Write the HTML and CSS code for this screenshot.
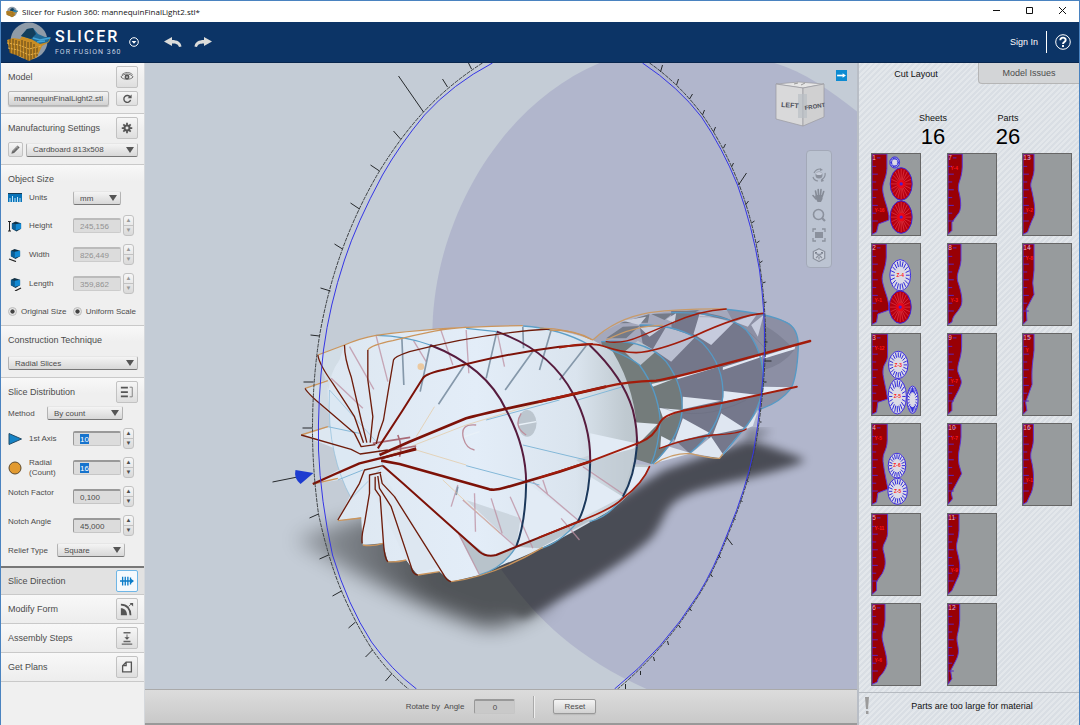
FILE: index.html
```html
<!DOCTYPE html>
<html lang="en">
<head>
    <meta charset="UTF-8">
    <meta name="viewport" content="width=device-width, initial-scale=1.0">
    <title>Slicer for Fusion 360</title>
    <link rel="stylesheet" href="styles.css">
</head>
<body>
<svg class="defs" aria-hidden="true">
    <defs>
        <symbol id="logo" viewBox="0 0 44 40">
            <circle cx="22" cy="19" r="18.500" fill="#8f9ba8"/>
            <path d="M0 18 L6 16 L13 17 L18 10 L24 7 L30 13 L37 16 L44 15 L42 20 L35 24 L30 35 L22 39 L16 36 L9 33 L3 31 Z" fill="#c98d24"/>
            <path d="M14 14 L20 7 L26 6 L31 12 L38 15 L44 15 L41 20 L33 22 L24 17 Z" fill="#206a98"/>
            <path d="M14 14 L20 7 L26 6 L29 12 L24 17 Z" fill="#123e5c"/>
            <path d="M26 16 L33 18 L43 16 M30 20 L38 19" stroke="#41a4d8" stroke-width="1.500" fill="none"/>
            <path d="M3 17 V31 M6 17 V32 M9 18 V33 M12 19 V34 M15 18 V35 M18 19 V37 M21 20 V39 M24 20 V38 M27 22 V36 M30 24 V34" stroke="#59421a" stroke-width="1"/>
            <path d="M0 21 L12 23 L22 27 L34 24 M1 26 L11 28 L22 33 L31 31" stroke="#e5b14d" stroke-width="1" stroke-dasharray="2 1" fill="none"/>
        </symbol>
        <symbol id="cube" viewBox="0 0 12 12">
            <path d="M1 3 L5 1 L11 3 V9 L6 12 L1 9 Z" fill="#123247"/>
            <path d="M1 3 L5 4 V11 L1 9 Z" fill="#0c5f97"/>
            <path d="M5 4 L11 3 V9 L5 11 Z" fill="#1389d3"/>
        </symbol>
    </defs>
</svg>
<div class="app">
    <div class="titlebar">
        <svg class="title-logo"><use href="#logo"/></svg>
        <span class="title-text">Slicer for Fusion 360: mannequinFinalLight2.stl*</span>
        <div class="window-buttons">
            <button aria-label="Minimize"><svg viewBox="0 0 9 9"><path d="M1 4.500 H8"/></svg></button>
            <button aria-label="Maximize"><svg viewBox="0 0 9 9"><path d="M1.500 1.500 H7.500 V7.500 H1.500 Z"/></svg></button>
            <button aria-label="Close"><svg viewBox="0 0 9 9"><path d="M1 1 L8 8 M8 1 L1 8"/></svg></button>
        </div>
    </div>

    <header class="header">
        <svg class="logo"><use href="#logo"/></svg>
        <div class="brand">
            <span class="brand-name">SLICER</span>
            <span class="brand-sub">FOR FUSION 360</span>
        </div>
        <button class="head-btn menu-btn" aria-label="Menu"><svg viewBox="0 0 10 10"><circle cx="5" cy="5" r="4.300" fill="none" stroke="#fff" stroke-width="1"/><path d="M2.600 4 H7.400 L5 6.800 Z" fill="#fff"/></svg></button>
        <button class="head-btn arrow-btn" aria-label="Undo"><svg viewBox="0 0 18 12"><path d="M0 5.500 L8 1 V4 C13 4 17 6 17.500 10.500 L15 11 C14 8 12 7.500 8 7.500 V10 Z" fill="#dcdcda"/></svg></button>
        <button class="head-btn arrow-btn" aria-label="Redo"><svg viewBox="0 0 18 12"><path d="M18 5.500 L10 1 V4 C5 4 1 6 .5 10.500 L3 11 C4 8 6 7.500 10 7.500 V10 Z" fill="#dcdcda"/></svg></button>
        <a class="signin" href="#">Sign In</a>
        <button class="head-btn help-btn" aria-label="Help"><svg viewBox="0 0 16 16"><circle cx="8" cy="8" r="7.300" fill="none" stroke="#fff" stroke-width="1"/><path d="M5.300 6.300 C5.300 2.800 10.700 2.800 10.700 6 C10.700 8 8 8 8 10 M8 11 V13" fill="none" stroke="#fff" stroke-width="1.900"/></svg></button>
    </header>

    <main class="main">
        <aside class="sidebar">
            <section class="group">
                <div class="group-head">
                    <h2>Model</h2>
                    <button class="tool" aria-label="Show model"><svg viewBox="0 0 16 16"><path d="M1 8 C4 3.500 12 3.500 15 8 C12 11.500 4 11.500 1 8 Z M2 5.500 C6 2 11 2 14.500 5.500" fill="none" stroke="#666"/><circle cx="8" cy="8" r="2.800" fill="#555"/><circle cx="8" cy="8" r="1" fill="#ddd"/></svg></button>
                </div>
                <div class="line model-line">
                    <button class="btn file-btn">mannequinFinalLight2.stl</button>
                    <button class="tool short" aria-label="Reload"><svg viewBox="0 0 16 16"><path d="M12 6 A5 5 0 1 0 12.500 10" fill="none" stroke="#555" stroke-width="2"/><path d="M8 7.500 H14 V2 Z" fill="#555"/></svg></button>
                </div>
            </section>

            <section class="group">
                <div class="group-head">
                    <h2>Manufacturing Settings</h2>
                    <button class="tool" aria-label="Settings"><svg viewBox="0 0 16 16"><path d="M8 2 V14 M2 8 H14 M3.800 3.800 L12.200 12.200 M12.200 3.800 L3.800 12.200" stroke="#555" stroke-width="2"/><circle cx="8" cy="8" r="4" fill="#555"/><circle cx="8" cy="8" r="1.700" fill="#e5e5e5"/></svg></button>
                </div>
                <div class="line">
                    <button class="tool pencil" aria-label="Edit"><svg viewBox="0 0 16 16"><path d="M2 14 L3 10 L11 2 L14 5 L6 13 Z" fill="#666"/><path d="M4 11 L12 3 M9 4 L12 7" stroke="#bbb"/></svg></button>
                    <span class="pick grow"><select aria-label="Material"><option>Cardboard 813x508</option></select></span>
                </div>
            </section>

            <section class="group object-size">
                <h2>Object Size</h2>
                <div class="row">
                    <svg class="row-icon" viewBox="0 0 14 14"><path d="M0 3 H14 V11 H0 Z" fill="#0873b8"/><path d="M0 2.500 H14" stroke="#163b55"/><path d="M2 11 V7 M4.500 11 V5 M7 11 V7 M9.500 11 V6 M12 11 V7" stroke="#bfe4f8"/></svg>
                    <label for="units">Units</label>
                    <span class="pick units"><select id="units"><option>mm</option></select></span>
                </div>
                <div class="row">
                    <svg class="row-icon" viewBox="0 0 14 14"><use href="#cube" x="3" y="1" width="11" height="12"/><path d="M0 2.500 H3 M0 12 H3 M1.500 2.500 V12" stroke="#222"/></svg>
                    <label for="height">Height</label>
                    <input class="num off" id="height" type="text" value="245,156">
                    <span class="spin off"><button aria-label="Height up">▲</button><button aria-label="Height down">▼</button></span>
                </div>
                <div class="row">
                    <svg class="row-icon" viewBox="0 0 14 14"><use href="#cube" x="2" y="0" width="11" height="11"/><path d="M1 11 L8 13.500" stroke="#222" stroke-width="1.300"/></svg>
                    <label for="width">Width</label>
                    <input class="num off" id="width" type="text" value="826,449">
                    <span class="spin off"><button aria-label="Width up">▲</button><button aria-label="Width down">▼</button></span>
                </div>
                <div class="row">
                    <svg class="row-icon" viewBox="0 0 14 14"><use href="#cube" x="2" y="0" width="11" height="11"/><path d="M7 14 L13 11" stroke="#222" stroke-width="1.300"/></svg>
                    <label for="length">Length</label>
                    <input class="num off" id="length" type="text" value="359,862">
                    <span class="spin off"><button aria-label="Length up">▲</button><button aria-label="Length down">▼</button></span>
                </div>
                <div class="radios">
                    <label><input type="radio" name="size" checked>Original Size</label>
                    <label><input type="radio" name="scale" checked>Uniform Scale</label>
                </div>
            </section>

            <section class="group technique">
                <h2>Construction Technique</h2>
                <span class="pick"><select aria-label="Construction Technique"><option>Radial Slices</option></select></span>
            </section>

            <section class="group distribution">
                <div class="group-head">
                    <h2>Slice Distribution</h2>
                    <button class="tool" aria-label="Distribution"><svg viewBox="0 0 16 16"><path d="M1 3 H9 M1 8 H9 M1 13 H9" stroke="#555" stroke-width="2"/><path d="M11 2.500 H14 V13.500 H11" stroke="#777" fill="none"/></svg></button>
                </div>
                <div class="line method">
                    <label for="method">Method</label>
                    <span class="pick"><select id="method"><option>By count</option></select></span>
                </div>
                <div class="row">
                    <svg class="row-icon" viewBox="0 0 14 14"><path d="M1 1.500 L13.500 7 L1 12.500 Z" fill="#1583c5" stroke="#234c68"/></svg>
                    <label for="axis">1st Axis</label>
                    <input class="num picked" id="axis" type="text" value="10">
                    <span class="spin"><button aria-label="Axis up">▲</button><button aria-label="Axis down">▼</button></span>
                </div>
                <div class="row">
                    <svg class="row-icon" viewBox="0 0 14 14"><circle cx="7" cy="7" r="6" fill="#e29a30" stroke="#5e4a2c"/></svg>
                    <label for="radial">Radial (Count)</label>
                    <input class="num picked" id="radial" type="text" value="16">
                    <span class="spin"><button aria-label="Radial up">▲</button><button aria-label="Radial down">▼</button></span>
                </div>
                <div class="row wide">
                    <label for="factor">Notch Factor</label>
                    <input class="num" id="factor" type="text" value="0,100">
                    <span class="spin"><button aria-label="Factor up">▲</button><button aria-label="Factor down">▼</button></span>
                </div>
                <div class="row wide">
                    <label for="angle">Notch Angle</label>
                    <input class="num" id="angle" type="text" value="45,000">
                    <span class="spin"><button aria-label="Angle up">▲</button><button aria-label="Angle down">▼</button></span>
                </div>
                <div class="line relief">
                    <label for="relief">Relief Type</label>
                    <span class="pick"><select id="relief"><option>Square</option></select></span>
                </div>
            </section>

            <section class="step active">
                <h2>Slice Direction</h2>
                <button class="tool" aria-label="Slice Direction"><svg viewBox="0 0 16 16"><path d="M0 8 H14 M3 3 V13 M6 3 V13 M9 3 V13 M12 4 V12" stroke="#0b7cc8" stroke-width="1.500"/><path d="M12 5 L16 8 L12 11 Z" fill="#0b7cc8"/></svg></button>
            </section>
            <section class="step">
                <h2>Modify Form</h2>
                <button class="tool" aria-label="Modify Form"><svg viewBox="0 0 16 16"><path d="M1 3 C8 3 12 8 12 15" fill="none" stroke="#555" stroke-width="2"/><path d="M1 7 C5 7 8 10 8 15 H1 Z" fill="#555"/><path d="M10 5 L13 2" stroke="#555"/><path d="M11 1 H15 V5 Z" fill="#555"/></svg></button>
            </section>
            <section class="step">
                <h2>Assembly Steps</h2>
                <button class="tool" aria-label="Assembly Steps"><svg viewBox="0 0 16 16"><path d="M4 2 H12 M4 12 H12 M2 15 H14" stroke="#666" stroke-width="1.500"/><path d="M8 4 V8" stroke="#555"/><path d="M5 7 H11 L8 10 Z" fill="#555"/></svg></button>
            </section>
            <section class="step">
                <h2>Get Plans</h2>
                <button class="tool" aria-label="Get Plans"><svg viewBox="0 0 16 16"><path d="M7 2.500 H13 V13.500 H3 V6.500 Z M7 2.500 V6.500 H3" fill="#f3f3f3" stroke="#555" stroke-width="1.500"/></svg></button>
            </section>
        </aside>

        <div class="stage">
            <div class="viewport">
                <svg class="scene" viewBox="145 63 713 626" preserveAspectRatio="xMidYMid slice">
                    <defs>
                        <filter id="soft" x="-20%" y="-20%" width="140%" height="140%"><feGaussianBlur stdDeviation="5"/></filter>
                        <filter id="softer" x="-20%" y="-30%" width="140%" height="160%"><feGaussianBlur stdDeviation="10"/></filter>
                        <linearGradient id="shade" gradientUnits="userSpaceOnUse" x1="285" y1="0" x2="430" y2="0">
                            <stop offset="0" stop-color="#000" stop-opacity=".35"/>
                            <stop offset="1" stop-color="#000"/>
                        </linearGradient>
                        <linearGradient id="skin" gradientUnits="userSpaceOnUse" x1="200" y1="0" x2="1200" y2="0">
                            <stop offset="0" stop-color="#dde7f1"/>
                            <stop offset=".45" stop-color="#e3edf8"/>
                            <stop offset=".75" stop-color="#dae4ee"/>
                            <stop offset=".9" stop-color="#bfc9d0"/>
                            <stop offset="1" stop-color="#b9c3ca"/>
                        </linearGradient>
                    </defs>

                    <rect x="145" y="63" width="713" height="626" fill="#c4ccd6"/>
                    <path d="M433 326 C436 220 500 105 600 63 H775 C805 72 830 90 858 112 V689 H647 C570 655 530 610 500 567 C455 495 431 420 433 326 Z" fill="#b1b6cc"/>

                    <!-- shadow on the floor -->
                    <g opacity=".58">
                        <path d="M295 540 Q350 515 420 510 L520 530 L550 600 Q510 632 480 626 Q390 595 295 540 Z" fill="url(#shade)" filter="url(#softer)"/>
                        <path d="M430 530 L600 510 L665 470 L750 440 C775 448 795 455 806 460 C780 474 720 482 690 494 C664 505 668 515 655 534 C640 554 570 596 524 618 C500 606 480 580 430 560 Z" fill="#000" filter="url(#soft)"/>
                    </g>
                    <path d="M745 430 Q765 428 772 432 L750 440 Z" fill="#000" fill-opacity=".35" filter="url(#soft)"/>

                    <!-- narrow end of the body -->
                    <g transform="translate(540 290) scale(.33333)" stroke-linejoin="round">
                        <path d="M160 150 Q230 85 400 62 Q600 50 740 95 Q780 115 776 180 Q772 260 755 295 Q720 340 655 360 Q640 420 550 495 Q540 510 450 490 Q390 495 335 522 L200 300 Z" fill="#a4a8bc"/>
                        <path d="M560 57 Q700 75 740 95 Q780 115 776 180 Q772 260 755 295 Q720 340 655 360 L640 200 Z" fill="#8c8fa4"/>
                        <path d="M672 105 Q720 130 765 180 Q730 225 672 240 Z" fill="#777a8f" opacity=".7"/>
                        <path d="M395 62 Q560 60 620 120 Q670 180 672 270 Q665 360 610 420 L545 495 L400 300 Z" fill="#75788c"/>
                        <path d="M515 165 L585 95 L480 72 L462 132 Z M585 95 L655 70 L625 110 Z M672 75 L635 105 L655 140 Z" fill="#c6cbdd"/>
                        <path d="M672 198 L768 168 L765 178 L672 206 Z M550 232 L668 195 L668 200 L550 240 Z M672 290 L757 292 L670 312 Z M552 303 L658 315 L550 335 Z" fill="#e2e9f4"/>
                        <path d="M300 105 Q430 105 490 160 Q555 230 550 320 Q540 420 450 490 L350 400 Z" fill="#74778a"/>
                        <path d="M395 215 L468 140 L380 110 L340 178 Z" fill="#b9bed0"/>
                        <path d="M545 370 L615 415 L520 434 Z M655 362 L640 408 L618 418 Z M515 440 L550 492 L540 505 L455 490 Z M430 320 L545 332 L428 358 Z" fill="#dfe6f1"/>
                        <path d="M185 155 Q320 145 380 215 Q435 290 427 370 Q415 450 340 522 L250 400 Z" fill="#727a7b"/>
                        <path d="M300 228 L350 184 L295 152 L255 185 Z" fill="#bcc3cd"/>
                        <path d="M430 385 L512 430 L405 456 Z M360 354 L427 360 L372 388 Z M365 438 L400 456 L362 476 Z M390 470 L455 490 L345 520 Z M413 260 L545 228 L413 268 Z" fill="#e2e9f3"/>
                        <path d="M145 160 Q250 185 300 225 Q355 300 362 390 Q358 470 335 522 L200 480 Z" fill="#747c7b"/>
                        <path d="M240 100 L330 72 L325 98 Z M335 72 L400 70 L375 90 Z M400 66 L480 60 L460 70 L410 100 Z M200 145 L250 110 L300 108 L260 145 Z" fill="#757b88"/>
                        <path d="M250 92 L320 80 L300 105 Z M380 88 L410 70 L405 100 Z M300 112 L375 108 L330 140 Z" fill="#cbd0de"/>
                        <path d="M265 395 L355 402 L300 458 Z M335 282 L400 268 L340 290 Z" fill="#dfe7ef"/>
                        <path d="M480 80 Q600 75 680 180 M360 350 Q480 400 620 330" fill="none" stroke="#666a7c" stroke-width="2" opacity=".5"/>
                        <g fill="none" stroke="#559ac6" stroke-width="4">
                            <path d="M550 57 Q690 70 740 97 Q780 115 776 180 Q772 260 755 295 Q720 340 655 360"/>
                            <path d="M395 68 Q560 65 620 120 Q670 180 672 270 Q665 360 610 420 L548 497"/>
                            <path d="M300 105 Q430 105 490 160 Q555 230 550 320 Q540 420 450 490"/>
                            <path d="M185 155 Q320 145 380 215 Q435 290 427 370 Q415 450 340 522"/>
                            <path d="M145 160 Q250 185 300 225 Q355 300 362 390 Q358 470 335 522"/>
                        </g>
                        <path d="M160 150 Q230 85 330 68 Q430 55 560 57 M200 150 Q290 105 370 106 M345 522 Q390 490 450 490 Q510 505 540 505 L550 492" fill="none" stroke="#c99b68" stroke-width="4"/>
                    </g>

                    <!-- wide end of the body -->
                    <g transform="translate(260 310) scale(.33333)" stroke-linejoin="round">
                        <path d="M175 135 L255 105 Q300 85 350 76 Q540 50 790 47 Q900 55 1000 90 L1060 125 Q1135 250 1133 400 Q1130 440 1120 462 L1170 465 Q1110 575 1020 620 Q860 715 740 760 L660 795 L575 815 L540 785 L475 795 L440 750 L385 755 L370 700 L310 705 L305 622 L235 632 L300 500 L160 522 L300 445 L125 375 L210 350 L290 385 L137 235 L200 210 Z" fill="url(#skin)"/>
                        <path d="M137 235 L205 212 Q200 300 230 360 L290 400 Z M175 135 L255 105 L240 150 Q210 190 208 240 Z" fill="#d2dde6"/>
                        <path d="M660 795 L595 670 L690 740 L770 712 Q730 775 660 795 Z M1000 628 L840 715 L770 710 L955 630 Z" fill="#b8c3cb"/>
                        <path d="M620 570 L800 630 L770 710 Z M950 450 L1090 400 L1130 420 L1090 550 Z" fill="#c3cdd5" opacity=".7"/>
                        <path d="M800 515 L955 630 L770 712 Z M992 500 L1090 560 L955 630 Z M1100 560 L1120 470 L1168 472 Q1130 540 1100 560 Z M992 370 L1130 400 L1125 415 L995 450 Z" fill="#e2ebf5"/>
                        <path d="M210 240 Q205 350 225 430 Q240 500 275 565 L370 470 L355 400 Z" fill="#dce8f3" stroke="#8cbcdb" stroke-width="2"/>
                        <path d="M320 500 L370 490 L540 770 L470 790 L440 750 Z" fill="#dde7f1"/>
                        <circle cx="484" cy="170" r="10" fill="#ebc9a0"/>
                        <ellipse cx="803" cy="340" rx="28" ry="40" fill="#b3bdc5" opacity=".8"/>
                        <path d="M775 345 L830 335 M615 380 L660 365" stroke="#e9f1f8" stroke-width="4"/>
                        <path d="M650 345 Q600 340 612 385 Q620 415 645 420 M785 310 Q760 350 800 375" fill="none" stroke="#bd8f9d" stroke-width="4"/>
                        <g fill="none" stroke="#bc8ea0" stroke-width="4" opacity=".75">
                            <path d="M270 110 L343 238 M350 78 L385 215 M215 205 L310 295 M462 92 L500 155 M543 57 L580 165 M712 62 L735 170 M620 60 L628 190 M595 525 L575 590 M645 550 L648 665 M695 565 L728 670 M752 560 L820 715 M610 570 L770 712 M597 670 L660 795 M820 515 L955 630 M905 625 L960 690 M850 510 L865 555 M970 470 L1095 555"/>
                        </g>
                        <g fill="none" stroke="#8598aa" stroke-width="5">
                            <path d="M427 82 L433 225 M512 105 L482 245 M615 165 L537 283 M712 65 L680 205 M823 120 L737 240 M875 60 L840 180 M790 50 L792 115 M980 107 L900 210 M595 530 L590 555"/>
                        </g>
                        <path d="M470 380 L525 290 M375 440 L620 345 L900 260 M470 420 L620 465 M550 510 L720 670" fill="none" stroke="#e4c59a" stroke-width="2"/>
                        <path d="M620 467 L840 525 M790 405 L1000 455 M955 270 L1090 230 M680 330 L900 270 M205 350 L300 370 M235 510 L310 480" fill="none" stroke="#84b8d8" stroke-width="3"/>
                        <path d="M415 375 Q430 410 420 440 M340 400 L452 382 M400 420 L470 408" fill="none" stroke="#a96b78" stroke-width="5"/>

                        <g fill="none" stroke="#571c3e" stroke-width="6">
                            <path d="M512 105 Q680 170 740 300 Q800 410 800 520"/>
                            <path d="M712 65 Q870 120 940 250 Q995 350 992 460"/>
                            <path d="M990 105 Q1090 200 1120 300 Q1135 360 1132 410"/>
                        </g>
                        <g fill="none" stroke="#1b385b" stroke-width="6">
                            <path d="M800 520 Q798 640 770 710"/>
                            <path d="M992 460 Q990 570 955 635"/>
                            <path d="M1132 410 Q1125 500 1090 560"/>
                        </g>
                        <g fill="none" stroke="#5d9fc7" stroke-width="4">
                            <path d="M350 76 Q440 78 512 105 M620 55 L712 65 M790 48 Q900 55 990 105 M770 710 Q730 775 660 795 M955 635 Q900 700 845 715 M1090 560 Q1050 620 990 635"/>
                        </g>
                        <g fill="none" stroke="#cb955c" stroke-width="4">
                            <path d="M175 135 L255 105 Q300 85 350 76 Q540 50 790 47 M325 120 Q335 105 400 92 Q540 55 620 52 M137 235 L205 212 M125 375 L205 350 M235 632 L305 624 M310 705 Q340 710 370 700 M385 755 Q410 758 440 750 M475 795 L540 785 M575 815 Q700 800 850 712 M160 522 L235 505 M870 60 Q950 60 1000 90"/>
                        </g>
                        <g fill="none" stroke="#6e1c0b" stroke-width="4">
                            <path d="M175 135 Q180 165 220 220 L285 320 L312 398"/>
                            <path d="M255 105 Q255 145 275 200 L305 330 L322 398"/>
                            <path d="M325 120 V210 L340 320 L332 398"/>
                            <path d="M350 402 L358 370 L372 330 L385 250 L402 150 Q405 140 450 125 Q660 70 870 57"/>
                            <path d="M137 235 Q140 245 180 280 L285 370 L305 410 L348 404"/>
                            <path d="M125 375 L275 418 L302 432 L385 420"/>
                            <path d="M235 630 L300 520 L315 480 L370 467"/>
                            <path d="M308 700 Q305 680 315 640 L330 550 L330 495 L365 487"/>
                            <path d="M385 755 Q375 745 372 700 L362 560 L347 538 V500"/>
                            <path d="M475 795 Q460 795 455 770 L395 590 L360 535 L355 498"/>
                            <path d="M575 815 Q562 813 550 790 L405 560 L368 520 L362 490"/>
                        </g>
                        <g fill="none" stroke="#7d1208">
                            <path stroke-width="6" d="M355 415 L430 300 L490 205 Q500 190 560 178 Q740 130 900 110 L1000 102"/>
                            <path stroke-width="8" d="M360 435 L450 395 L620 325 Q680 308 900 262 L1040 230"/>
                            <path stroke-width="8" d="M365 452 L420 462 L690 538 Q710 542 740 532 L900 485 L990 455"/>
                            <path stroke-width="6" d="M370 467 L430 520 L660 725 Q680 742 710 735 L900 658 L970 630"/>
                            <path stroke-width="7" d="M160 522 L220 495 L300 460 L470 418"/>
                            <path stroke-width="7" d="M365 445 L470 415"/>
                        </g>
                    </g>

                    <!-- slice edges that run on to the narrow end -->
                    <g transform="translate(540 290) scale(.33333)" fill="none" stroke="#a21c0b" stroke-linecap="round">
                        <path stroke-width="5" d="M60 173 Q150 155 190 168 Q250 188 290 188 Q350 185 460 140 Q600 75 672 70"/>
                        <path stroke-width="7" d="M0 335 L200 290 Q260 275 350 272 Q400 265 545 225 L812 153"/>
                        <path stroke-width="6" d="M0 563 L150 515 L300 458 Q345 440 360 400 Q370 375 430 362 L550 338 L772 290"/>
                        <path stroke-width="4" d="M200 155 Q250 162 300 140 L400 98 Q480 62 560 57"/>
                        <path stroke-width="4" d="M360 475 Q440 445 520 435 Q600 432 620 417"/>
                        <path stroke-width="5" d="M0 742 L130 690 Q220 655 250 625 Q310 580 330 530"/>
                    </g>
                    <path d="M593 340 Q570 328 540 328" fill="none" stroke="#cb955c"/>

                    <!-- rotation ring -->
                    <path class="ring-black" d="M483 63 Q450 84 424 112 Q401 137 380 171 Q358 208 343 249 Q328 290 320 336 Q313 380 313 430 Q313 470 319 514 Q329 560 342 591 Q355 622 373 650 Q390 674 409 689"/>
                    <path class="ring-black" d="M650 63 Q680 84 703 115 Q724 145 739 183 Q755 225 761 270 Q767 315 766 350 Q764 400 755 452 Q747 490 730 531 Q715 570 700 594 Q665 650 618 689"/>
                    <path class="ring-blue" d="M493 63 Q453 84 425 115 Q400 145 383 175 Q357 223 345 260 Q330 305 324 350 Q318 400 319 450 Q321 500 333 555 Q348 605 372 642 Q392 670 417 689"/>
                    <path class="ring-blue" d="M643 63 Q679 87 702 117 Q723 148 738 185 Q753 227 760 270 Q766 315 765 350 Q763 400 754 452 Q746 490 729 531 Q714 570 699 594 Q664 650 615 689"/>
                    <path class="ticks" d="M472 69 L469 63 M448 87 L443 79 M424 112 L399 76 M401 139 L394 131 M380 171 L371 165 M360 209 L351 203 M343 249 L335 244 M331 291 L321 288 M320 336 L311 335 M314 382 H304 M313 428 H303 M319 514 L310 518 M329 555 L320 559 M342 591 L333 596 M356 622 L349 628 M373 650 L366 657 M392 674 L386 681"/>
                    <path class="ticks" d="M661 72 L663 65 M677 85 L679 79 M690 99 L693 94 M703 115 L705 110 M714 132 L716 127 M724 148 L726 144 M732 167 L734 163 M739 185 L747 173 M746 205 L749 201 M752 223 L755 221 M757 243 L760 241 M760 263 L763 261 M763 283 L766 282 M764 303 L767 302 M765 342 H768 M765 361 H772 M764 382 H767 M760 422 H762 M747 480 L749 482 M741 500 L743 502 M734 518 L736 520 M727 537 L733 545 M719 555 L721 558 M711 574 L713 577 M690 608 L692 611 M679 625 L681 628 M668 641 L669 645 M654 657 L655 661 M641 671 V675 M626 684 V689"/>
                    <path class="ticks" d="M273 482 L298 477"/>
                    <path d="M296 470 L314 473 L301 484 Q294 478 296 470 Z" fill="#1d3bd0"/>
                </svg>

                <button class="expand" aria-label="Hide panel"><svg viewBox="0 0 10 10"><path d="M1 5 H7" stroke="#fff" stroke-width="1.500"/><path d="M6 3 L9 5 L6 7 Z" fill="#fff"/></svg></button>

                <svg class="viewcube" viewBox="0 0 52 48">
                    <path d="M2 4 L25 2 L50 4 L29 8 Z" fill="#e6e6e6" stroke="#9a9a9f" stroke-width=".7"/>
                    <path d="M2 4 L29 8 V46 L2 39 Z" fill="#d9d9da" stroke="#9a9a9f" stroke-width=".7"/>
                    <path d="M29 8 L50 4 V37 L29 46 Z" fill="#d0d0d1" stroke="#9a9a9f" stroke-width=".7"/>
                    <path d="M24 14 H33 V38 H24 Z" fill="#b9bfc4" opacity=".7"/>
                    <path d="M20 4 L24 3 M27 5 L31 3" stroke="#999"/>
                    <text x="7" y="27" transform="rotate(4 7 27)">LEFT</text>
                    <text x="31" y="30" transform="rotate(-9 31 30)" class="front">FRONT</text>
                </svg>

                <nav class="navbar" aria-label="View tools">
                    <button aria-label="Orbit"><svg viewBox="0 0 14 14"><circle cx="7" cy="7" r="3.500" fill="#8b919d"/><ellipse cx="7" cy="5.500" rx="3" ry="1.500" fill="#c8cedb"/><path d="M1 9 Q2 12.500 6 13 M2 5 Q4 1 8 1 M13 5 Q14 9 9 12.500" fill="none" stroke="#8b919d" stroke-width="1.200"/><path d="M8 0 L11 2 L8 3 Z M10 10 L9 14 L12 13 Z" fill="#8b919d"/></svg></button>
                    <button aria-label="Pan"><svg viewBox="0 0 14 14"><path d="M4.500 8 L3.500 3 M6.500 7 L6.200 1.500 M8.500 7 L9 1.500 M10.300 8 L11.700 3.500 M4 11 L1 7.500" stroke="#858b97" stroke-width="1.600" stroke-linecap="round"/><path d="M3 8.500 L4 7 H10.800 L10.500 11 L9 14 H5.500 Z" fill="#858b97"/></svg></button>
                    <button aria-label="Zoom"><svg viewBox="0 0 14 14"><circle cx="6.500" cy="6.500" r="5" fill="none" stroke="#8b919d" stroke-width="1.600"/><path d="M10 10 L13 13" stroke="#8b919d" stroke-width="2.200"/></svg></button>
                    <button aria-label="Fit"><svg viewBox="0 0 14 14"><path d="M1 4 V1 H4 M10 1 H13 V4 M13 10 V13 H10 M4 13 H1 V10" fill="none" stroke="#8b919d" stroke-width="1.300"/><path d="M3 4 H11 V10 H3 Z" fill="#8b919d"/></svg></button>
                    <button aria-label="Perspective"><svg viewBox="0 0 14 14"><path d="M7 .7 L12.700 3.500 V10.500 L7 13.500 L1.300 10.500 V3.500 Z M3 5 L7 7 L11 5 M7 7 L4 10 M7 7 L10 10" fill="#cbd1dc" stroke="#8b919d" stroke-width="1.200"/><path d="M7 9 V11.500 M3 4.500 H5 M9 4.500 H11" stroke="#7d8390"/></svg></button>
                </nav>
            </div>

            <footer class="bottombar">
                <label for="rotate">Rotate by&nbsp; Angle</label>
                <input class="num" id="rotate" type="text" value="0">
                <span class="sep"></span>
                <button class="btn reset">Reset</button>
            </footer>
        </div>

        <aside class="panel">
            <div class="tabs">
                <button class="tab selected">Cut Layout</button>
                <button class="tab">Model Issues</button>
            </div>
            <div class="counts">
                <div><span>Sheets</span><strong>16</strong></div>
                <div><span>Parts</span><strong>26</strong></div>
            </div>
            <div class="sheets" id="sheets"></div>
            <div class="message">
                <svg viewBox="0 0 5 18"><path d="M0 0 H4 L3 12 H1 Z M1 14 H3.500 V17 H1 Z" fill="#9b9b9b"/></svg>
                <span>Parts are too large for material</span>
            </div>
        </aside>
    </main>
</div>
<script src="script.js"></script>
</body>
</html>
```
FILE: styles.css
```css
* {
    box-sizing: border-box;
}

body {
    margin: 0;
    font-family: "Liberation Sans", Arial, sans-serif;
    font-size: 8px;
    color: #4c4c4c;
}

h2 {
    margin: 0;
    font-size: 9px;
    line-height: 12px;
    font-weight: normal;
}

button, input, select {
    font: inherit;
    color: inherit;
    margin: 0;
    padding: 0;
}

button {
    border: none;
    background: none;
}

.defs {
    position: absolute;
    width: 0;
    height: 0;
}

.app {
    display: flex;
    flex-direction: column;
    height: 100vh;
    border: 1px solid #4a83c0;
    border-bottom: none;
    overflow: hidden;
}

/* window title */
.titlebar {
    display: flex;
    align-items: center;
    flex: none;
    height: 21px;
    padding-left: 5px;
    background: #fff;
    color: #111;
}

.title-logo {
    width: 12px;
    height: 12px;
    margin-right: 4px;
}

.title-text {
    font-family: "Open Sans", "Noto Sans", sans-serif;
    font-size: 8px;
}

.window-buttons {
    display: flex;
    margin-left: auto;
}

.window-buttons button {
    width: 33px;
    height: 20px;
}

.window-buttons svg {
    width: 9px;
    height: 9px;
    fill: none;
    stroke: #111;
}

/* blue header */
.header {
    display: flex;
    align-items: center;
    flex: none;
    height: 41px;
    padding: 0 8px 0 6px;
    background: #0c3466;
    border-bottom: 1px solid #08264e;
    color: #fff;
}

.logo {
    width: 44px;
    height: 40px;
}

.brand {
    display: flex;
    flex-direction: column;
    width: 74px;
    margin-left: 4px;
    font-family: Roboto, sans-serif;
    white-space: nowrap;
}

.brand-name {
    font-size: 16px;
    line-height: 20px;
    font-weight: 500;
    letter-spacing: 2px;
}

.brand-sub {
    font-size: 7px;
    line-height: 10px;
    letter-spacing: 1px;
    color: #c5d2e2;
}

.head-btn svg {
    display: block;
    width: 100%;
}

.menu-btn {
    width: 10px;
    margin-right: 25px;
}

.arrow-btn {
    width: 18px;
    margin-right: 12px;
}

.signin {
    margin-left: auto;
    padding-right: 8px;
    line-height: 22px;
    border-right: 1px solid #fff;
    color: #fff;
    font-size: 9px;
    text-decoration: none;
}

.help-btn {
    width: 16px;
    margin-left: 8px;
}

.main {
    display: grid;
    grid-template-columns: 144px 1fr 222px;
    flex: 1;
    min-height: 0;
}

/* left column */
.sidebar {
    background: #f0f0f0;
    border-right: 1px solid #d5d8dc;
    overflow: hidden;
}

.group {
    padding: 3px 6px 7px 7px;
    background: linear-gradient(#f8f8f8, #efefef 16px);
    border-bottom: 1px solid #c9c9c9;
}

.group-head, .line {
    display: flex;
    align-items: center;
    justify-content: space-between;
}

.tool {
    display: flex;
    align-items: center;
    justify-content: center;
    flex: none;
    width: 22px;
    height: 22px;
    border: 1px solid #c2c2c2;
    border-radius: 2px;
    background: linear-gradient(#f6f6f6, #dedede);
}

.tool svg {
    width: 14px;
    height: 14px;
}

.tool.short {
    height: 15px;
}

.tool.short svg, .pencil svg {
    width: 11px;
    height: 11px;
}

.tool.pencil {
    width: 15px;
    height: 15px;
    margin-right: 3px;
}

.line {
    margin-top: 3px;
}

.btn {
    height: 15px;
    border: 1px solid #b5b5b5;
    border-radius: 2px;
    background: linear-gradient(#f4f4f4, #d2d2d2);
    box-shadow: 0 1px 1px #bbb;
}

.file-btn {
    width: 101px;
}

.pick {
    display: flex;
    position: relative;
}

.pick select {
    width: 100%;
    height: 14px;
    padding-left: 6px;
    border: 1px solid #b3b3b3;
    border-top-color: #e6e6e6;
    border-bottom-color: #777;
    border-radius: 2px;
    background: linear-gradient(#f4f4f4, #d8d8d8);
    appearance: none;
}

.pick::after {
    content: "";
    position: absolute;
    right: 4px;
    top: 4px;
    border: 4px solid transparent;
    border-top: 6px solid #555;
    border-bottom: none;
    pointer-events: none;
}

.grow {
    flex: 1;
}

.row {
    display: grid;
    grid-template-columns: 20px 43px 48px 12px;
    column-gap: 1px;
    align-items: center;
    height: 29px;
}

.row.wide {
    grid-template-columns: 64px 48px 12px;
}

.row.wide label {
    padding-bottom: 8px;
}

.row label {
    line-height: 10px;
}

.row-icon {
    width: 14px;
    height: 14px;
}

.num {
    width: 48px;
    height: 15px;
    padding: 1px 0 0 6px;
    border: 1px solid #c6c6c6;
    border-top: 2px solid #999;
    border-left-color: #999;
    border-radius: 2px;
    background: #dcdcdc;
}

.num.off {
    border-color: #bbb #ccc #ccc #bbb;
    color: #929292;
}

.num.picked {
    color: #fff;
    background: linear-gradient(#1673cd, #1673cd) 6px 1px / 9px 10px no-repeat #dcdcdc;
}

.row .spin {
    display: flex;
    flex-direction: column;
    justify-self: end;
    width: 11px;
    height: 21px;
    border: 1px solid #c2c2c2;
    border-radius: 3px;
    background: linear-gradient(#f6f6f6, #dadada);
}

.spin button {
    flex: 1;
    height: 10px;
    font-size: 6px;
    line-height: 9px;
}

.spin button + button {
    border-top: 1px solid #c2c2c2;
}

.spin.off {
    color: #999;
}

.object-size {
    padding-top: 8px;
    padding-bottom: 0;
}

.object-size .row:nth-of-type(1) {
    height: 26px;
}

.units select {
    width: 50px;
}

.radios {
    display: flex;
    justify-content: space-between;
    height: 27px;
    padding-right: 2px;
    align-items: center;
    white-space: nowrap;
}

.radios label {
    display: flex;
    align-items: center;
    gap: 4px;
}

.radios input {
    appearance: none;
    width: 9px;
    height: 9px;
    border: 1px solid #bbb;
    border-radius: 50%;
    background: radial-gradient(#444 35%, #e6e6e6 50%);
}

.technique {
    padding-top: 8px;
    padding-bottom: 7px;
}

.technique h2 {
    margin-bottom: 10px;
}

.distribution {
    border-bottom: none;
    padding-bottom: 9px;
}

.method .pick {
    width: 76px;
    margin-right: 15px;
}

.method {
    margin-bottom: 4px;
}

.relief .pick {
    width: 68px;
    margin-right: 13px;
}

.step {
    display: flex;
    align-items: center;
    justify-content: space-between;
    height: 29px;
    padding: 0 6px 0 7px;
    background: linear-gradient(#f8f8f8, #ededed);
    border-bottom: 1px solid #c9c9c9;
}

.step.active {
    background: #e2e2e2;
    border-top: 2px solid #777;
}

.active .tool {
    border-color: #6fb6e6;
    background: #f4f9fd;
}

/* drawing area */
.stage {
    display: flex;
    flex-direction: column;
    min-width: 0;
    min-height: 0;
}

.viewport {
    position: relative;
    flex: 1;
    min-height: 0;
    background: #c4ccd6;
}

.scene {
    display: block;
    width: 100%;
    height: 100%;
}

.ring-black, .ring-blue, .ticks {
    fill: none;
    stroke-width: 1;
}

.ring-black {
    stroke: #3c4043;
    stroke-dasharray: 4 1;
}

.ring-blue {
    stroke: #3535e6;
}

.ticks {
    stroke: #26292c;
}

.expand {
    position: absolute;
    top: 7px;
    right: 10px;
    width: 11px;
    height: 11px;
    background: #0d8bd2;
}

.expand svg {
    display: block;
}

.viewcube {
    position: absolute;
    top: 17px;
    right: 31px;
    width: 52px;
    height: 48px;
}

.viewcube text {
    font-size: 7px;
    font-weight: bold;
    fill: #4c4f59;
}

.viewcube .front {
    font-size: 6px;
}

.navbar {
    display: flex;
    flex-direction: column;
    justify-content: flex-end;
    align-items: center;
    gap: 6px;
    position: absolute;
    top: 87px;
    right: 25px;
    width: 26px;
    height: 118px;
    padding-bottom: 5px;
    border: 1px solid #a3a9b8;
    border-radius: 4px;
    background: #bcc4d2;
}

.navbar button {
    width: 14px;
    height: 14px;
}

.navbar svg {
    display: block;
}

.bottombar {
    display: flex;
    align-items: center;
    justify-content: center;
    flex: none;
    height: 36px;
    background: linear-gradient(#dcdcdc, #c9c9c9);
    border-top: 1px solid #aaa;
    border-bottom: 2px solid #999;
}

.bottombar .num {
    width: 41px;
    margin-left: 10px;
    padding-left: 0;
    text-align: center;
    background: #c9c9c9;
}

.sep {
    width: 2px;
    height: 22px;
    margin: 0 18px;
    background: #eee;
    border-left: 1px solid #aaa;
}

.reset {
    width: 43px;
    border-color: #999;
}

/* right column */
.panel {
    display: flex;
    flex-direction: column;
    border-left: 2px solid #b9bec6;
    background: repeating-linear-gradient(135deg, #e3e7eb 0, #e3e7eb 2px, #d9dee4 2px, #d9dee4 4px);
    color: #111;
    font-size: 9px;
    overflow: hidden;
}

.tabs {
    display: flex;
    flex: none;
    height: 21px;
}

.tab {
    flex: 1;
}

.tab.selected {
    flex: 0 0 119px;
    padding-right: 5px;
}

.tab + .tab {
    border-bottom: 1px solid #b5b5b5;
    border-left: 1px solid #b5b5b5;
    border-radius: 0 0 0 4px;
    background: #d3d5d7;
    color: #4c4c4c;
}

.counts {
    display: flex;
    flex: none;
    justify-content: center;
    padding-top: 28px;
    padding-left: 3px;
    height: 69px;
}

.counts div {
    display: flex;
    flex-direction: column;
    align-items: center;
    width: 75px;
}

.counts span {
    line-height: 12px;
}

.counts strong {
    font-size: 22px;
    line-height: 25px;
    font-weight: normal;
    color: #000;
}

.sheets {
    display: grid;
    grid-template-columns: repeat(3, 50px);
    grid-template-rows: repeat(6, 83px);
    grid-auto-flow: column;
    justify-content: space-between;
    row-gap: 7px;
    padding: 0 7px 0 12px;
}

.sheet {
    width: 50px;
    height: 83px;
    border: 1px solid #666;
    background: #979b9d;
}

.sheet .no {
    font-size: 20px;
    fill: #eab4c4;
}

.sheet .tag {
    font-size: 15px;
    font-weight: bold;
    fill: #ff1616;
}

.message {
    display: flex;
    align-items: center;
    height: 27px;
    margin-top: 6px;
    padding-left: 6px;
    border-top: 1px solid #b5bac0;
}

.message svg {
    width: 5px;
    height: 18px;
}

.message span {
    flex: 1;
    padding-right: 5px;
    text-align: center;
}
```
FILE: script.js
```js
// right edge of the slice on every sheet, with its tag and tag height
const sheets = [
    ['H46 V45 C44 80 28 90 34 120 C40 150 46 155 52 190 V203 L20 215 L14 240 L0 247', 'Y-16', 178],
    ['H44 V40 C42 80 28 90 32 115 C40 150 48 160 52 190 V203 L18 215 L14 240 L0 247', 'Y-1', 178],
    ['H48 V70 C44 95 32 90 34 125 C40 160 44 170 48 200 L18 210 L14 240 L0 247', 'Y-12', 50],
    ['H47 V50 C46 85 32 85 34 115 C40 160 44 170 49 200 L18 212 L14 240 L0 247', 'Y-5', 50],
    ['H48 V60 C46 85 32 90 34 110 C46 150 40 165 32 182 L14 208 V235 L0 247', 'Y-11', 50],
    ['H40 V50 C38 85 28 85 32 110 C40 145 46 160 46 185 C36 220 22 215 16 240 L0 247', 'Y-6', 178],
    ['H44 V40 C42 80 30 85 32 110 C40 140 42 165 34 180 L12 210 V235 L0 247', 'Y-4', 50],
    ['H40 V50 C38 80 24 90 30 115 C42 150 46 175 40 190 C28 215 16 215 12 240 L0 247', 'Y-3', 178],
    ['H42 V40 C40 80 28 90 30 115 C44 150 44 145 34 170 L12 212 V235 L0 247', 'Y-7', 152],
    ['H40 V40 C38 75 28 90 34 125 L42 153 L10 212 L14 230 L0 247', 'Y-7', 50],
    ['H34 V50 C32 85 22 90 28 115 C40 155 38 185 28 200 L12 235 L0 247', 'Y-9', 178],
    ['H36 V50 C34 90 26 90 28 115 C34 145 34 150 26 170 L8 205 L12 230 L0 247', '', 0],
    ['H34 V50 C32 75 22 85 24 100 C36 150 40 180 32 195 C22 215 20 225 14 240 L0 247', 'Y-2', 178],
    ['H34 V80 L30 120 L34 155 L10 200 L12 235 L0 247', 'Y-8', 50],
    ['H34 V50 C30 90 26 100 28 155 L8 210 L12 235 L0 247', 'Y', 55],
    ['H32 V50 C30 80 22 80 24 105 C36 150 34 190 26 210 L12 240 L0 247', 'Y-1', 178]
];

// round slices: sheet, cx, cy, rx, ry, solid, tag
const discs = [
    [1, 70, 26, 15, 17, false, ''],
    [1, 90, 92, 34, 50, true, ''],
    [1, 90, 194, 34, 50, true, ''],
    [2, 87, 96, 32, 48, false, 'Z-4'],
    [2, 87, 194, 34, 50, true, ''],
    [3, 81, 95, 30, 42, false, 'Z-3'],
    [3, 78, 192, 28, 54, false, 'Z-5'],
    [3, 125, 202, 17, 42, false, ''],
    [4, 77, 128, 27, 38, false, 'Z-6'],
    [4, 79, 207, 30, 40, false, 'Z-5']
];

function drawDisc(d) {
    const [, cx, cy, rx, ry, solid, tag] = d;
    let out = `<ellipse cx="${cx}" cy="${cy}" rx="${rx}" ry="${ry}" fill="${solid ? '#b50010' : '#dcdbe6'}" stroke="#3a28e0" stroke-width="3"/>`;
    const inner = solid ? 0.1 : 0.55;
    let spokes = '';
    for (let i = 0; i < 20; i++) {
        const a = i * Math.PI / 10;
        const x = Math.cos(a) * rx;
        const y = Math.sin(a) * ry;
        spokes += `M${(cx + x * inner).toFixed(1)} ${(cy + y * inner).toFixed(1)} L${(cx + x * 0.92).toFixed(1)} ${(cy + y * 0.92).toFixed(1)} `;
    }
    out += `<path d="${spokes}" stroke="${solid ? '#e8404c' : '#2a26d8'}" stroke-width="${solid ? 2 : 3}"/>`;
    if (solid) {
        out += `<circle cx="${cx}" cy="${cy}" r="13" fill="#f00010" opacity=".8"/><circle cx="${cx}" cy="${cy}" r="5" fill="#4a20d0"/>`;
    }
    if (tag) {
        out += `<text class="tag" x="${cx}" y="${cy + 5}" text-anchor="middle">${tag}</text>`;
    }
    return out;
}

let html = '';
sheets.forEach((sheet, i) => {
    const [edge, tag, y] = sheet;
    let notches = '';
    for (let n = 0; n < 8; n++) {
        notches += `M0 ${38 + n * 24} H${n % 2 ? 18 : 13} `;
    }
    html += `<svg class="sheet" viewBox="0 0 148 249" preserveAspectRatio="none">
        <path d="M0 0 ${edge} Z" fill="#990005" stroke="#5a35d8" stroke-width="3"/>
        <path d="${notches} M15 12 H26" stroke="#5a28c0" stroke-width="3"/>
        ${discs.filter(d => d[0] === i + 1).map(drawDisc).join('')}
        <text class="tag" x="8" y="${y}">${tag}</text>
        <text class="no" x="1" y="18">${i + 1}</text>
    </svg>`;
});
document.getElementById('sheets').innerHTML = html;
```
